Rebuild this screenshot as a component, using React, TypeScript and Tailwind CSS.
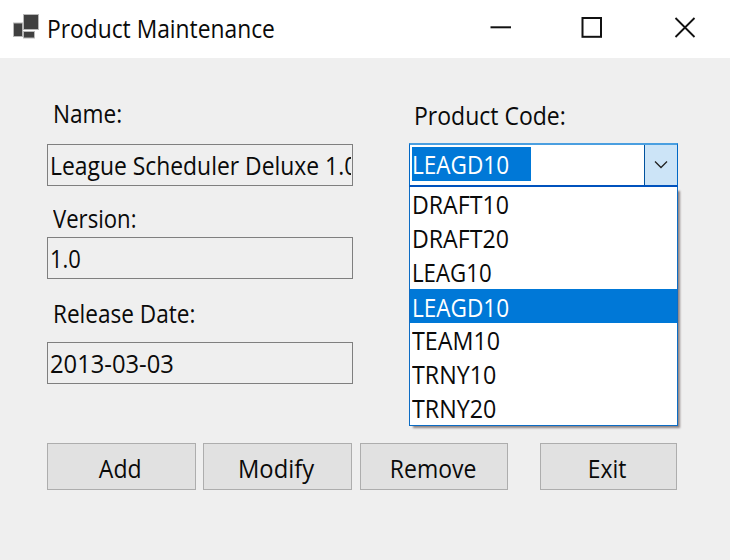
import type { ReactNode } from "react";

const codes: [string, string][] = [
  ["DRAFT10", "scale-x-[0.927]"],
  ["DRAFT20", "scale-x-[0.927]"],
  ["LEAG10", "scale-x-[0.89]"],
  ["LEAGD10", "scale-x-[0.902]"],
  ["TEAM10", "scale-x-[0.932]"],
  ["TRNY10", "scale-x-[0.93]"],
  ["TRNY20", "scale-x-[0.93]"],
];

function Label({ className, scale, children }: { className: string; scale: string; children: ReactNode }) {
  return (
    <div className={`h-[35px] leading-[35px] whitespace-nowrap ${className}`}>
      <span className={`inline-block origin-left ${scale}`}>{children}</span>
    </div>
  );
}

function Field({ className, scale, children }: { className: string; scale: string; children: ReactNode }) {
  return (
    <div className={`h-[42px] w-[306px] border border-[#7f7f7f] pr-px pl-[2px] ${className}`}>
      <div className="h-[40px] overflow-hidden leading-[41px] whitespace-nowrap">
        <span className={`inline-block origin-left ${scale}`}>{children}</span>
      </div>
    </div>
  );
}

function Button({ className, scale, children }: { className: string; scale: string; children: ReactNode }) {
  return (
    <button className={`h-[47px] border border-[#adadad] bg-[#e1e1e1] pt-[3px] pr-[2px] leading-[40px] ${className}`}>
      <span className={`inline-block ${scale}`}>{children}</span>
    </button>
  );
}

export default function App() {
  return (
    <div className="flex h-[560px] w-[730px] flex-col overflow-hidden bg-[#efefef] font-['Open_Sans',sans-serif] text-[25px] text-[#0a0a0a]">
      <header className="flex h-[58px] shrink-0 items-center bg-white">
        <svg className="mb-[2px] ml-[12px] shrink-0" width="28" height="28" viewBox="0 0 28 28">
          <g fill="#404040" stroke="#b8b8b8" strokeWidth="1">
            <rect x="1.5" y="9" width="9" height="13.5" />
            <rect x="11.5" y="0.5" width="15" height="15" />
            <rect x="11.5" y="17.5" width="11" height="6.5" />
          </g>
        </svg>
        <h1 className="ml-[7px] grow whitespace-nowrap">
          <span className="inline-block origin-left scale-x-[0.912]">Product Maintenance</span>
        </h1>
        <svg className="shrink-0" width="240" height="58" viewBox="0 0 240 58" fill="none" stroke="#111">
          <path d="M0.5 27.3h20.5" strokeWidth="2" />
          <rect x="92.5" y="18" width="18.5" height="18.8" strokeWidth="2" />
          <path d="M185.5 18l19 19M204.5 18l-19 19" strokeWidth="1.8" />
        </svg>
      </header>

      <main className="flex h-[385px] shrink-0 pl-[47px]">
        <section className="w-[306px] pt-[37px]">
          <Label className="pt-px pl-[6px]" scale="scale-x-[0.905]">Name:</Label>
          <Field className="mt-[14px]" scale="scale-x-[0.915]">League Scheduler Deluxe 1.0</Field>
          <Label className="mt-[15px] pl-[6px]" scale="scale-x-[0.885]">Version:</Label>
          <Field className="mt-[1px]" scale="scale-x-[0.88]">1.0</Field>
          <Label className="mt-[16px] pt-px pl-[6px]" scale="scale-x-[0.903]">Release Date:</Label>
          <Field className="mt-[12px]" scale="scale-x-[0.95]">2013-03-03</Field>
        </section>

        <section className="ml-[56px] w-[269px] pt-[39px]">
          <Label className="pt-px pl-[5px]" scale="scale-x-[0.92]">Product Code:</Label>
          <div className="mt-[11px] flex h-[44px] border-x border-t-2 border-b-2 border-x-[#0067c5] border-t-[#4a9fe0] border-b-[#0052bd] bg-white">
            <div className="mt-[2px] ml-[2px] h-[34px] w-[119px] bg-[#0078d7] leading-[35px] text-white">
              <span className="inline-block origin-left scale-x-[0.902]">LEAGD10</span>
            </div>
            <div className="ml-auto flex w-[33px] items-center justify-center border-l border-[#00529e] bg-[#cce4f7]">
              <svg width="14" height="10" viewBox="0 0 14 10" fill="none" stroke="#222" strokeWidth="1.3">
                <path d="M1 1.5l6 6 6-6" />
              </svg>
            </div>
          </div>
          <ul className="h-[239px] border-x border-b border-x-[#0c6cc4] border-b-[#0c6cc4] bg-white shadow-[3px_3px_2px_-1px_#8f8585]">
            {codes.map(([code, scale]) => (
              <li
                key={code}
                className={`h-[34px] pl-[2px] leading-[35px] ${code === "LEAGD10" ? "bg-[#0078d7] pt-px text-white" : ""}`}
              >
                <span className={`inline-block origin-left ${scale}`}>{code}</span>
              </li>
            ))}
          </ul>
        </section>
      </main>

      <footer className="flex pl-[47px]">
        <Button className="w-[149px]" scale="scale-x-[0.92]">Add</Button>
        <Button className="ml-[7px] w-[149px]" scale="scale-x-[0.95]">Modify</Button>
        <Button className="ml-[8px] w-[148px]" scale="scale-x-[0.918]">Remove</Button>
        <Button className="ml-[32px] w-[137px]" scale="scale-x-[0.915]">Exit</Button>
      </footer>
    </div>
  );
}
